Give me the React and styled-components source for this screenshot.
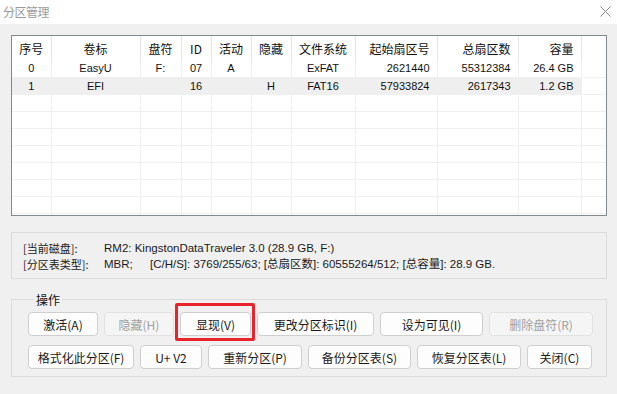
import React from "react";
import styled, { createGlobalStyle } from "styled-components";

const GlobalStyle = createGlobalStyle`
  html, body {
    margin: 0;
    padding: 0;
    background: #f0f0f0;
  }
  body {
    font-family: "Liberation Sans", "Noto Sans CJK SC", sans-serif;
    color: #1a1a1a;
  }
`;

const columns = [
  { key: "no", title: "序号", width: 39, align: "center" },
  { key: "label", title: "卷标", width: 89, align: "center" },
  { key: "drive", title: "盘符", width: 41, align: "center" },
  { key: "id", title: "ID", width: 30, align: "center" },
  { key: "active", title: "活动", width: 40, align: "center" },
  { key: "hidden", title: "隐藏", width: 40, align: "center" },
  { key: "fs", title: "文件系统", width: 64, align: "center" },
  { key: "start", title: "起始扇区号", width: 82, align: "right" },
  { key: "total", title: "总扇区数", width: 81, align: "right" },
  { key: "size", title: "容量", width: 63, align: "right" },
];

const partitions = [
  { no: "0", label: "EasyU", drive: "F:", id: "07", active: "A", hidden: "", fs: "ExFAT", start: "2621440", total: "55312384", size: "26.4 GB" },
  { no: "1", label: "EFI", drive: "", id: "16", active: "", hidden: "H", fs: "FAT16", start: "57933824", total: "2617343", size: "1.2 GB" },
];

const buttonRows = [
  [
    { text: "激活(A)", width: 70 },
    { text: "隐藏(H)", width: 70, disabled: true },
    { text: "显现(V)", width: 71, marked: true },
    { text: "更改分区标识(I)", width: 117 },
    { text: "设为可见(I)", width: 103 },
    { text: "删除盘符(R)", width: 104, disabled: true },
  ],
  [
    { text: "格式化此分区(F)", width: 106 },
    { text: "U+ V2", width: 62 },
    { text: "重新分区(P)", width: 94 },
    { text: "备份分区表(S)", width: 103 },
    { text: "恢复分区表(L)", width: 104 },
    { text: "关闭(C)", width: 65 },
  ],
];

function App() {
  return (
    <Window>
      <GlobalStyle />
      <TitleBar>
        <Title>分区管理</Title>
        <CloseButton>
          <svg width="11" height="11" viewBox="0 0 11 11">
            <path d="M0.5 0.5 L10.5 10.5 M10.5 0.5 L0.5 10.5" stroke="#8a8a8a" strokeWidth="1" />
          </svg>
        </CloseButton>
      </TitleBar>

      <Body>
        <ListBox>
          <Grid>
            <colgroup>
              {columns.map((c) => (
                <col key={c.key} style={{ width: c.width }} />
              ))}
              <col />
            </colgroup>
            <thead>
              <tr>
                {columns.map((c) => (
                  <HeadCell key={c.key} align={c.align}>
                    {c.title}
                  </HeadCell>
                ))}
                <HeadCell $filler />
              </tr>
            </thead>
            <tbody>
              {partitions.map((p, i) => (
                <Row key={i} $selected={i === 1}>
                  {columns.map((c) => (
                    <Cell key={c.key} align={c.align}>
                      {p[c.key]}
                    </Cell>
                  ))}
                  <FillerCell />
                </Row>
              ))}
              {Array.from({ length: 8 }).map((_, i) => (
                <Row key={"e" + i}>
                  {columns.map((c) => (
                    <Cell key={c.key} />
                  ))}
                  <FillerCell />
                </Row>
              ))}
            </tbody>
          </Grid>
        </ListBox>

        <InfoBox>
          <InfoLine>
            <InfoLabel>[当前磁盘]:</InfoLabel>
            <span>RM2: KingstonDataTraveler 3.0 (28.9 GB, F:)</span>
          </InfoLine>
          <InfoLine>
            <InfoLabel>[分区表类型]:</InfoLabel>
            <TypeValue>MBR;</TypeValue>
            <span>[C/H/S]: 3769/255/63; [总扇区数]: 60555264/512; [总容量]: 28.9 GB.</span>
          </InfoLine>
        </InfoBox>

        <Group>
          <Legend>操作</Legend>
          {buttonRows.map((row, r) => (
            <ButtonRow key={r}>
              {row.map((b) => (
                <Button key={b.text} $width={b.width} disabled={b.disabled}>
                  {b.text}
                  {b.marked && <Mark />}
                </Button>
              ))}
            </ButtonRow>
          ))}
        </Group>
      </Body>
    </Window>
  );
}

export default App;

const Window = styled.div`
  width: 617px;
  height: 394px;
  background: #f0f0f0;
  overflow: hidden;
`;

const TitleBar = styled.div`
  height: 24px;
  background: #fff;
  display: flex;
  align-items: center;
  justify-content: space-between;
  padding: 0 6px 0 3px;
  box-sizing: border-box;
`;

const Title = styled.div`
  font-family: "Noto Sans CJK SC", sans-serif;
  font-size: 12px;
  color: #9c9c9c;
  letter-spacing: -0.5px;
  margin-top: -2px;
`;

const CloseButton = styled.div`
  display: flex;
  align-items: center;
  margin-top: -1px;
`;

const Body = styled.div`
  padding: 11px 10px 0 11px;
`;

const ListBox = styled.div`
  height: 179px;
  border: 1px solid #828790;
  background: #fff;
  overflow: hidden;
`;

const Grid = styled.table`
  width: 100%;
  table-layout: fixed;
  border-collapse: collapse;
`;

const HeadCell = styled.th`
  height: 24px;
  padding: 0 7px;
  font-family: "Noto Sans CJK SC", sans-serif;
  font-size: 12px;
  font-weight: normal;
  color: #111;
  text-align: ${(p) => p.align || "left"};
  border-right: ${(p) => (p.$filler ? "none" : "1px solid #e5e5e5")};
  white-space: nowrap;
  overflow: hidden;
`;

const Row = styled.tr`
  height: 17px;
  td:not(:last-child) {
    background: ${(p) => (p.$selected ? "#efefef" : "transparent")};
  }
`;

const Cell = styled.td`
  height: 16px;
  padding: 0 7px;
  font-size: 11px;
  color: #111;
  text-align: ${(p) => p.align || "left"};
  border-right: 1px solid #f0f0f0;
  border-bottom: 1px solid #f0f0f0;
  white-space: nowrap;
  overflow: hidden;
`;

const FillerCell = styled.td`
  border-bottom: 1px solid #f0f0f0;
`;

const InfoBox = styled.div`
  margin-top: 16px;
  height: 47px;
  box-sizing: border-box;
  border: 1px solid #dcdcdc;
  padding: 7px 11px 0;
  font-size: 11.5px;
`;

const InfoLine = styled.div`
  display: flex;
  align-items: center;
  height: 16px;
  line-height: 16px;
  white-space: nowrap;
`;

const InfoLabel = styled.span`
  width: 81px;
  flex-shrink: 0;
  font-family: "Noto Sans CJK SC", sans-serif;
  font-size: 11px;
`;

const TypeValue = styled.span`
  width: 46px;
  flex-shrink: 0;
`;

const Group = styled.fieldset`
  margin: 12px 0 0;
  padding: 4px 0 0 16px;
  height: 86px;
  box-sizing: border-box;
  border: 1px solid #dcdcdc;
  display: flex;
  flex-direction: column;
  gap: 9px;
`;

const Legend = styled.legend`
  font-family: "Noto Sans CJK SC", sans-serif;
  font-size: 12px;
  padding: 0 2px;
  margin-left: 6px;
  color: #111;
`;

const ButtonRow = styled.div`
  display: flex;
  gap: 6px;
`;

const Button = styled.button`
  position: relative;
  width: ${(p) => p.$width}px;
  height: 24px;
  padding: 0;
  border: 1px solid ${(p) => (p.disabled ? "#e2e2e2" : "#cfcfcf")};
  border-radius: 4px;
  background: ${(p) => (p.disabled ? "#f5f5f5" : "#fdfdfd")};
  color: ${(p) => (p.disabled ? "#a0a0a0" : "#1a1a1a")};
  font-family: "Noto Sans CJK SC", sans-serif;
  font-size: 12px;
  white-space: nowrap;
`;

const Mark = styled.span`
  position: absolute;
  top: -10px;
  left: -6px;
  right: -5px;
  bottom: -6px;
  border: 3px solid #e8232a;
  border-radius: 2px;
  pointer-events: none;
`;
